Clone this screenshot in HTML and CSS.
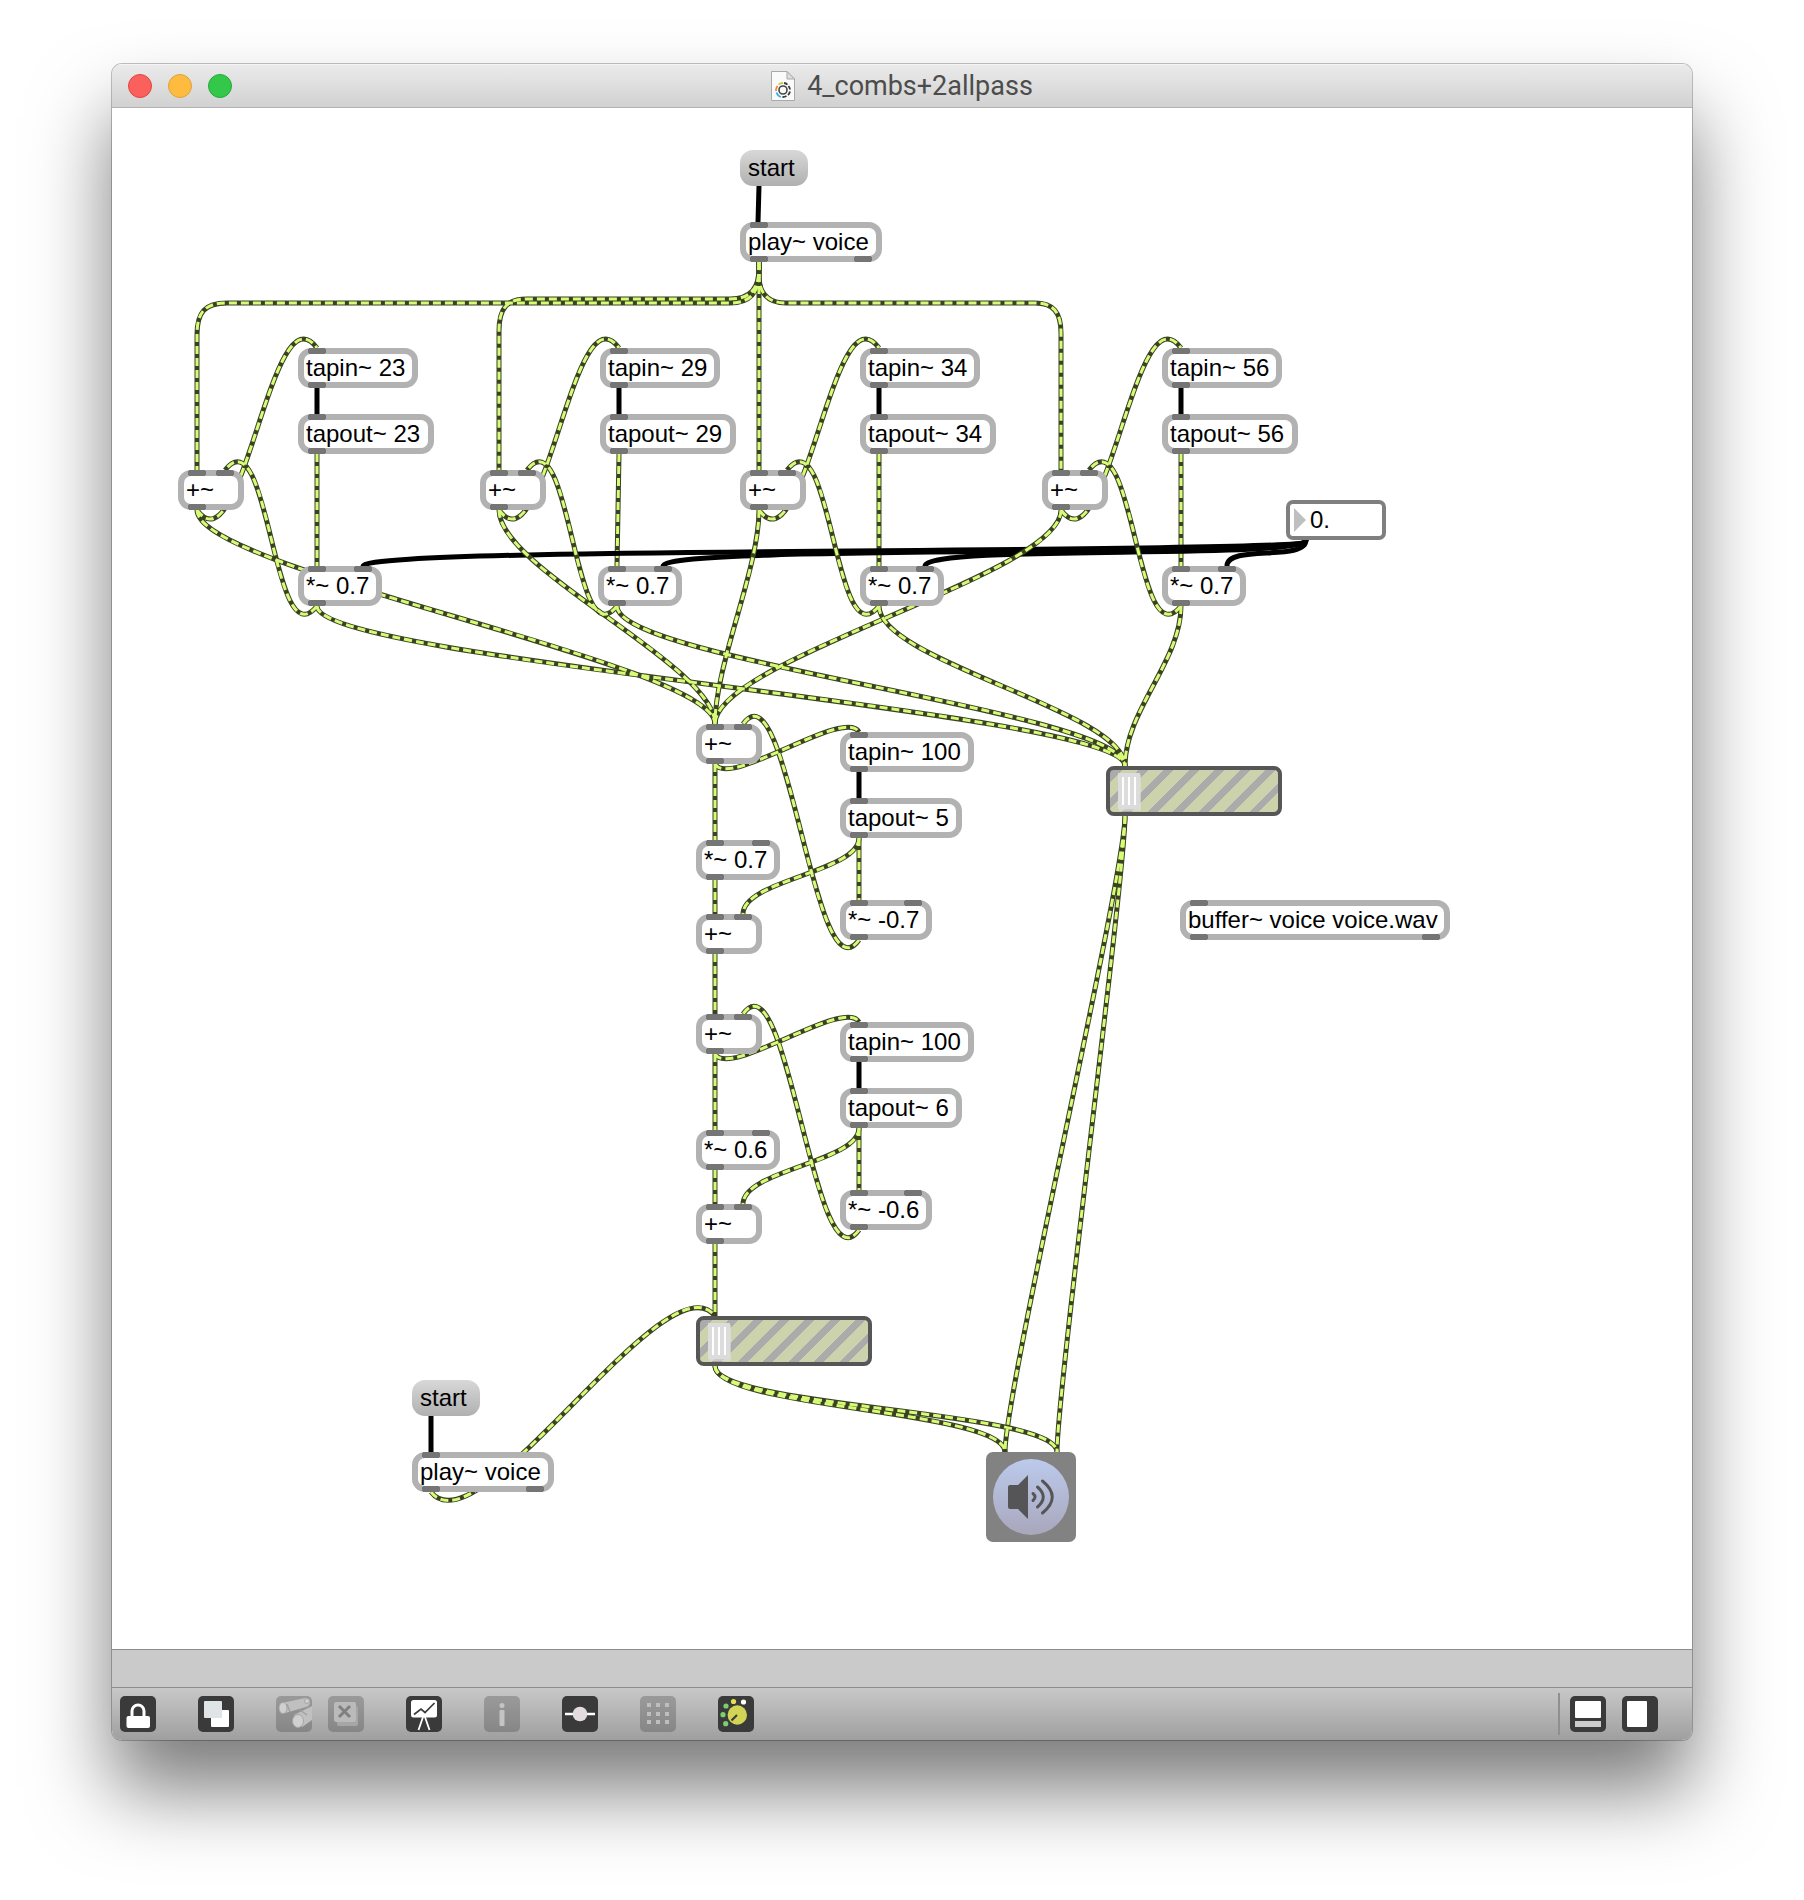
FILE: index.html
```html
<!DOCTYPE html>
<html lang="en">
<head>
<meta charset="utf-8">
<title>4_combs+2allpass</title>
<link rel="stylesheet" href="styles.css">
</head>
<body>
<main class="window">
  <header class="titlebar">
    <div class="lights">
      <button class="light light-close" aria-label="Close"></button>
      <button class="light light-minimize" aria-label="Minimize"></button>
      <button class="light light-zoom" aria-label="Zoom"></button>
    </div>
    <h1 class="title">
      <svg class="doc-icon" viewBox="0 0 24 30" aria-hidden="true">
        <path d="M.5.5H16L23.500 8V29.500H.5Z" fill="#fafafa" stroke="#a9a9a9"/>
        <path d="M16 .5V8h7.500Z" fill="#dedede" stroke="#a9a9a9"/>
        <circle cx="12" cy="19" r="4" fill="none" stroke="#444" stroke-width="1.600"/>
        <g fill="none" stroke-width="1.800">
          <path d="M13 12a7 7 0 0 1 3.500 1.600M17.500 15a7 7 0 0 1 1.500 3.500M19 20.500a7 7 0 0 1-2 3.500M15.500 25a7 7 0 0 1-4 1" stroke="#3c3c3c"/>
          <path d="M10 26a7 7 0 0 1-4.500-4.500" stroke="#35b4e8"/>
          <path d="M5 20a7 7 0 0 1 1.500-5" stroke="#f0803c"/>
          <path d="M7.500 13.600A7 7 0 0 1 12 12" stroke="#c9cf3c"/>
        </g>
      </svg>
      <span>4_combs+2allpass</span>
    </h1>
  </header>

  <section class="patcher" aria-label="Patch">
    <svg class="cords" viewBox="112 108 1580 1500" aria-hidden="true">
      <defs>
        <g id="cords-back">
          <path d="M317 454V566"/>
          <path d="M619 454L617 566"/>
          <path d="M879 454V566"/>
          <path d="M1181 454V566"/>
        </g>
        <g id="cords-front">
          <path d="M759 262V272C759 292 751 303 730 303H227C205 303 197 312 197 335V470"/>
          <path d="M759 262V268C759 288 751 299 730 299H527C507 299 499 308 499 331V470"/>
          <path d="M759 262V276C759 292 767 303 786 303H1035C1053 303 1061 312 1061 333V470"/>
          <path d="M759 262V470"/>

          <path d="M197 510C243 573 271 285 317 348"/>
          <path d="M499 510C545 573 573 285 619 348"/>
          <path d="M759 510C805 573 833 285 879 348"/>
          <path d="M1061 510C1107 573 1135 285 1181 348"/>

          <path d="M317 606C272 662 270 414 225 470"/>
          <path d="M617 606C573 662 571 414 527 470"/>
          <path d="M879 606C834 662 832 414 787 470"/>
          <path d="M1181 606C1136 662 1134 414 1089 470"/>

          <path d="M197 510C197 571 715 663 715 724"/>
          <path d="M499 510C499 569 715 665 715 724"/>
          <path d="M759 510C759 570 715 664 715 724"/>
          <path d="M1061 510C1061 575 715 659 715 724"/>

          <path d="M317 606C317 661 1125 711 1125 766"/>
          <path d="M617 606C617 661 1125 711 1125 766"/>
          <path d="M879 606C879 661 1125 711 1125 766"/>
          <path d="M1181 606C1181 661 1125 711 1125 766"/>

          <path d="M715 764V840M715 880V914M715 954V1014"/>
          <path d="M859 838V900"/>
          <path d="M715 764C729 789 845 707 859 732"/>
          <path d="M859 838C859 872 743 880 743 914"/>
          <path d="M859 940C814 1003 788 661 743 724"/>

          <path d="M715 1054V1130M715 1170V1204M715 1244V1316"/>
          <path d="M859 1128V1190"/>
          <path d="M715 1054C729 1079 845 997 859 1022"/>
          <path d="M859 1128C859 1162 743 1170 743 1204"/>
          <path d="M859 1230C814 1293 788 951 743 1014"/>

          <path d="M431 1492C479 1554 667 1254 715 1316"/>
          <path d="M715 1366C715 1408 1005 1410 1005 1452"/>
          <path d="M715 1366C715 1408 1057 1410 1057 1452"/>
          <path d="M1125 816C1125 876 1005 1392 1005 1452"/>
          <path d="M1125 816C1125 876 1057 1392 1057 1452"/>
        </g>
      </defs>
      <use href="#cords-back" class="cord-edge"/>
      <use href="#cords-back" class="cord-core"/>
      <g class="cord-control">
        <path d="M759 186L758 222"/>
        <path d="M317 388V414M619 388V414M879 388V414M1181 388V414"/>
        <path d="M859 772V798M859 1062V1088"/>
        <path d="M431 1416V1452"/>
        <path d="M1306 540C1306 556 363 545 363 566"/>
        <path d="M1306 540C1306 558 663 544 663 566"/>
        <path d="M1306 540C1306 560 925 544 925 566"/>
        <path d="M1306 540C1306 562 1227 544 1227 566"/>
      </g>
      <use href="#cords-front" class="cord-edge"/>
      <use href="#cords-front" class="cord-core"/>
    </svg>

    <button class="message at-start-a">start</button>
    <div class="object two-out at-play-a">play~ voice</div>

    <div class="object at-tapin-1">tapin~ 23</div>
    <div class="object at-tapout-1">tapout~ 23</div>
    <div class="object two-in at-sum-1">+~</div>
    <div class="object two-in at-mul-1">*~ 0.7</div>

    <div class="object at-tapin-2">tapin~ 29</div>
    <div class="object at-tapout-2">tapout~ 29</div>
    <div class="object two-in at-sum-2">+~</div>
    <div class="object two-in at-mul-2">*~ 0.7</div>

    <div class="object at-tapin-3">tapin~ 34</div>
    <div class="object at-tapout-3">tapout~ 34</div>
    <div class="object two-in at-sum-3">+~</div>
    <div class="object two-in at-mul-3">*~ 0.7</div>

    <div class="object at-tapin-4">tapin~ 56</div>
    <div class="object at-tapout-4">tapout~ 56</div>
    <div class="object two-in at-sum-4">+~</div>
    <div class="object two-in at-mul-4">*~ 0.7</div>

    <div class="number at-feedback"><input type="text" value="0." aria-label="Comb feedback"></div>

    <div class="object two-in at-sum-5">+~</div>
    <div class="object at-tapin-5">tapin~ 100</div>
    <div class="object at-tapout-5">tapout~ 5</div>
    <div class="object two-in at-mul-5">*~ 0.7</div>
    <div class="object two-in at-sum-6">+~</div>
    <div class="object two-in at-neg-5">*~ -0.7</div>

    <div class="object two-in at-sum-7">+~</div>
    <div class="object at-tapin-6">tapin~ 100</div>
    <div class="object at-tapout-6">tapout~ 6</div>
    <div class="object two-in at-mul-6">*~ 0.6</div>
    <div class="object two-in at-sum-8">+~</div>
    <div class="object two-in at-neg-6">*~ -0.6</div>

    <input class="gain at-gain-a" type="range" min="0" max="157" value="0" aria-label="Comb gain">
    <input class="gain at-gain-b" type="range" min="0" max="157" value="0" aria-label="Allpass gain">
    <div class="object two-out at-buffer">buffer~ voice voice.wav</div>

    <button class="message at-start-b">start</button>
    <div class="object two-out at-play-b">play~ voice</div>

    <button class="dac at-dac" aria-label="Audio output">
      <svg viewBox="0 0 90 90" aria-hidden="true">
        <defs>
          <linearGradient id="dac-face" x1="0" y1="0" x2="0" y2="1">
            <stop offset="0" stop-color="#bccaec"/>
            <stop offset="1" stop-color="#a8a7bb"/>
          </linearGradient>
        </defs>
        <circle cx="45" cy="45" r="38" fill="url(#dac-face)"/>
        <path d="M24 33H32L42 23V67L32 57H24Q22 57 22 55V35Q22 33 24 33Z" fill="#555557"/>
        <g fill="none" stroke="#555557" stroke-width="3" stroke-linecap="round">
          <path d="M47 41.500Q51 45 47 48.500"/>
          <path d="M51.500 35Q63 45 51.500 55"/>
          <path d="M56.500 29Q76 45 56.500 61"/>
        </g>
      </svg>
    </button>
  </section>

  <div class="status"></div>

  <footer class="toolbar">
    <button class="tool" aria-label="Lock">
      <svg viewBox="0 0 36 36"><path d="M12 22V15a6 6 0 0 1 12 0V22" fill="none" stroke="#fff" stroke-width="3"/><rect x="6.500" y="20" width="23.500" height="12" rx="2" fill="#fff"/></svg>
    </button>
    <button class="tool" aria-label="New view">
      <svg viewBox="0 0 36 36"><rect x="13" y="14" width="18" height="17" rx="1" fill="#fff"/><rect x="6" y="5" width="18" height="17" rx="1" fill="#dfe5e6"/></svg>
    </button>
    <button class="tool tool-off" disabled aria-label="Find">
      <svg viewBox="0 0 36 36"><g fill="#c0c0c0"><path d="M6 7L29 2Q34 2 34 6T30 11L9 17Z"/><path d="M18 19L36 10V24L26 31Z"/></g><g fill="#d0d0d0" stroke="#a6a6a6"><ellipse cx="7" cy="12" rx="4" ry="5.500"/><ellipse cx="22" cy="25" rx="5.500" ry="6.500"/><circle cx="31" cy="5" r="2.500"/></g><path d="M11 8l3 8M24 14l7 5" stroke="#a0a0a0" stroke-width="1.500"/></svg>
    </button>
    <button class="tool tool-off tool-paired" disabled aria-label="Delete view">
      <svg viewBox="0 0 36 36"><rect x="9" y="10" width="21" height="20" rx="2" fill="#a6a6a6"/><rect x="6" y="6" width="22" height="20" rx="2" fill="#bababa"/><path d="M11 10l11 11M22 10L11 21" stroke="#808080" stroke-width="3"/></svg>
    </button>
    <button class="tool" aria-label="Presentation">
      <svg viewBox="0 0 36 36"><path d="M17 21L12.500 34M19 21L23.500 34" stroke="#fff" stroke-width="1.800"/><rect x="5" y="4" width="26" height="17.500" rx="2.500" fill="#fff"/><path d="M8 18.500L15 13L19 16.500L28.500 7" fill="none" stroke="#3a3a3a" stroke-width="1.700"/></svg>
    </button>
    <button class="tool tool-off" disabled aria-label="Inspector">
      <svg viewBox="0 0 36 36" fill="#c4c4c4"><circle cx="18" cy="9.500" r="2.500"/><rect x="15.500" y="14" width="5" height="16" rx="1"/></svg>
    </button>
    <button class="tool" aria-label="Patch cords">
      <svg viewBox="0 0 36 36"><path d="M3 18H33" stroke="#fff" stroke-width="2.500"/><circle cx="18" cy="18" r="7.300" fill="#e2dcde"/></svg>
    </button>
    <button class="tool tool-off" disabled aria-label="Grid">
      <svg viewBox="0 0 36 36" fill="#bebebe"><path d="M7 7h4v4H7ZM16 7h4v4h-4ZM25 7h4v4h-4ZM7 16h4v4H7ZM16 16h4v4h-4ZM25 16h4v4h-4ZM7 24h4v4H7ZM16 24h4v4h-4ZM25 24h4v4h-4Z"/></svg>
    </button>
    <button class="tool" aria-label="Audio status">
      <svg viewBox="0 0 36 36"><circle cx="19.300" cy="19" r="9.700" fill="#d2d455"/><path d="M13.500 24.500L19 19" stroke="#3a3a3a" stroke-width="2.200"/><g fill="#78d070"><circle cx="7.700" cy="27.700" r="2.600"/><circle cx="5" cy="18.700" r="2.600"/><circle cx="8" cy="10" r="2.600"/></g><circle cx="15.500" cy="5.500" r="2.600" fill="#e8df4c"/><circle cx="25.500" cy="6" r="2.600" fill="#fff"/></svg>
    </button>
    <div class="toolbar-end">
      <button class="tool" aria-label="Bottom panel">
        <svg viewBox="0 0 36 36"><rect x="5" y="5" width="26" height="17" rx="1" fill="#fff"/><rect x="5" y="25" width="26" height="6" fill="#cbcbcb"/></svg>
      </button>
      <button class="tool tool-paired" aria-label="Side panel">
        <svg viewBox="0 0 36 36"><rect x="5" y="5" width="20" height="26" rx="1" fill="#fff"/></svg>
      </button>
    </div>
  </footer>
</main>
</body>
</html>
```
FILE: styles.css
```css
* { box-sizing: border-box; }

body {
  margin: 0;
  min-height: 100vh;
  padding: 64px 112px 160px;
  display: flex;
  background: #fff;
  font-family: "Liberation Sans", Arial, sans-serif;
  font-size: 24px;
  color: #000;
}

button {
  border: 0;
  padding: 0;
  font: inherit;
  color: inherit;
}

.window {
  flex: 1;
  min-width: 0;
  display: flex;
  flex-direction: column;
  border-radius: 10px;
  background: #fff;
  overflow: hidden;
  box-shadow: 0 0 0 1px rgba(0, 0, 0, .24), 0 50px 80px rgba(0, 0, 0, .52);
}

/* Title bar */
.titlebar {
  display: grid;
  grid-template-columns: 1fr auto 1fr;
  align-items: center;
  height: 44px;
  padding: 0 16px;
  border-bottom: 1px solid #b1b1b1;
  background: linear-gradient(#ebebeb, #d1d1d1);
  box-shadow: inset 0 1px #f4f4f4;
}

.lights { display: flex; gap: 16px; }

.light {
  width: 24px;
  height: 24px;
  border: 1px solid #e0443f;
  border-radius: 50%;
  background: #fc605c;
}
.light-minimize { border-color: #dfa13a; background: #fdbc40; }
.light-zoom { border-color: #25a93b; background: #34c84a; }

.title {
  display: flex;
  align-items: center;
  gap: 12px;
  margin: 0;
  font: 400 27px/30px Roboto, sans-serif;
  color: #4c4c4c;
}
.doc-icon { width: 24px; height: 30px; }

/* Patcher canvas */
.patcher {
  position: relative;
  flex: 1;
  min-height: 1500px;
  overflow: hidden;
}

.cords {
  position: absolute;
  left: 0;
  top: 0;
  width: 1580px;
  height: 1500px;
}
.cord-edge { fill: none; stroke: #3b4223; stroke-width: 5; }
.cord-core { fill: none; stroke: #d6fb76; stroke-width: 3; stroke-dasharray: 8 4; }
.cord-control { fill: none; stroke: #000; stroke-width: 5; }

.object,
.message,
.number,
.gain,
.dac { position: absolute; }

.object {
  height: 40px;
  padding-left: 2px;
  border: 6px solid #b2b2b2;
  border-radius: 13px;
  background: #fff;
  line-height: 28px;
  white-space: nowrap;
}

/* Inlets sit on the top edge of a box, outlets on the bottom edge */
.object::before,
.object::after {
  content: "";
  position: absolute;
  left: 4px;
  right: 4px;
  height: 6px;
  background: radial-gradient(circle at 3px 3px, #757575 3px, transparent 3px) left / 6px 6px no-repeat,
    radial-gradient(circle at 3px 3px, #757575 3px, transparent 3px) 12px 0 / 6px 6px no-repeat,
    linear-gradient(#757575, #757575) 3px 0 / 12px 6px no-repeat;
}
.object::before { top: -6px; }
.object::after { bottom: -6px; }

.two-in::before,
.two-out::after {
  background: radial-gradient(circle at 3px 3px, #757575 3px, transparent 3px) left / 6px 6px no-repeat,
    radial-gradient(circle at 3px 3px, #757575 3px, transparent 3px) 12px 0 / 6px 6px no-repeat,
    linear-gradient(#757575, #757575) 3px 0 / 12px 6px no-repeat,
    radial-gradient(circle at 3px 3px, #757575 3px, transparent 3px) right / 6px 6px no-repeat,
    radial-gradient(circle at 3px 3px, #757575 3px, transparent 3px) right 12px top 0 / 6px 6px no-repeat,
    linear-gradient(#757575, #757575) right 3px top 0 / 12px 6px no-repeat;
}

.message {
  width: 68px;
  height: 36px;
  padding-left: 8px;
  border-radius: 13px;
  background: linear-gradient(#d8d8d8, #b0b0b0);
  line-height: 36px;
  text-align: left;
}

.number {
  display: flex;
  align-items: center;
  gap: 4px;
  width: 100px;
  height: 40px;
  padding: 0 4px;
  border: 4px solid #7f7f7f;
  border-radius: 7px;
  background: #fff;
}
.number::before {
  content: "";
  flex: none;
  border: 12px solid transparent;
  border-left-color: #bfbfbf;
  border-right: 0;
}
.number input {
  min-width: 0;
  width: 100%;
  padding: 0;
  border: 0;
  background: none;
  font: inherit;
  color: inherit;
  outline: 0;
}

.gain {
  appearance: none;
  width: 176px;
  height: 50px;
  margin: 0;
  padding: 0 8px;
  border: 4px solid #565656;
  border-radius: 8px;
  background: repeating-linear-gradient(135deg, #ccd2ac 0 2px, #ababab 2px 9px, #ccd2ac 9px 18px);
}
.gain::-webkit-slider-thumb {
  appearance: none;
  width: 22px;
  height: 36px;
  border: solid #dcdcdc;
  border-width: 4px 3px;
  background: repeating-linear-gradient(90deg, #dcdcdc 0 1px, #fff 1px 3px, #dcdcdc 3px 6px);
  box-shadow: 1px 2px rgba(225, 225, 225, .6);
}

.dac {
  width: 90px;
  height: 90px;
  border-radius: 7px;
  background: #828282;
}
.dac svg { display: block; }

/* Box places on the canvas */
.at-start-a { left: 628px; top: 42px; }
.at-play-a { left: 628px; top: 114px; width: 142px; }

.at-tapin-1 { left: 186px; top: 240px; width: 120px; }
.at-tapout-1 { left: 186px; top: 306px; width: 136px; }
.at-sum-1 { left: 66px; top: 362px; width: 66px; }
.at-mul-1 { left: 186px; top: 458px; width: 84px; }

.at-tapin-2 { left: 488px; top: 240px; width: 120px; }
.at-tapout-2 { left: 488px; top: 306px; width: 136px; }
.at-sum-2 { left: 368px; top: 362px; width: 66px; }
.at-mul-2 { left: 486px; top: 458px; width: 84px; }

.at-tapin-3 { left: 748px; top: 240px; width: 120px; }
.at-tapout-3 { left: 748px; top: 306px; width: 136px; }
.at-sum-3 { left: 628px; top: 362px; width: 66px; }
.at-mul-3 { left: 748px; top: 458px; width: 84px; }

.at-tapin-4 { left: 1050px; top: 240px; width: 120px; }
.at-tapout-4 { left: 1050px; top: 306px; width: 136px; }
.at-sum-4 { left: 930px; top: 362px; width: 66px; }
.at-mul-4 { left: 1050px; top: 458px; width: 84px; }

.at-feedback { left: 1174px; top: 392px; }

.at-sum-5 { left: 584px; top: 616px; width: 66px; }
.at-tapin-5 { left: 728px; top: 624px; width: 134px; }
.at-tapout-5 { left: 728px; top: 690px; width: 122px; }
.at-mul-5 { left: 584px; top: 732px; width: 84px; }
.at-sum-6 { left: 584px; top: 806px; width: 66px; }
.at-neg-5 { left: 728px; top: 792px; width: 92px; }

.at-sum-7 { left: 584px; top: 906px; width: 66px; }
.at-tapin-6 { left: 728px; top: 914px; width: 134px; }
.at-tapout-6 { left: 728px; top: 980px; width: 122px; }
.at-mul-6 { left: 584px; top: 1022px; width: 84px; }
.at-sum-8 { left: 584px; top: 1096px; width: 66px; }
.at-neg-6 { left: 728px; top: 1082px; width: 92px; }

.at-gain-a { left: 994px; top: 658px; }
.at-gain-b { left: 584px; top: 1208px; }
.at-buffer { left: 1068px; top: 792px; width: 270px; }

.at-start-b { left: 300px; top: 1272px; }
.at-play-b { left: 300px; top: 1344px; width: 142px; }
.at-dac { left: 874px; top: 1344px; }

/* Status strip and toolbar */
.status {
  height: 38px;
  border-top: 1px solid #8d8d8d;
  background: #cacaca;
}

.toolbar {
  display: flex;
  align-items: center;
  gap: 42px;
  height: 53px;
  padding: 0 34px 0 8px;
  border-top: 1px solid #8d8d8d;
  background: linear-gradient(#c8c8c8, #9f9f9f);
}

.tool {
  width: 36px;
  height: 36px;
  border-radius: 5px;
  background: #3a3a3a;
}
.tool svg { display: block; }
.tool-off { background: linear-gradient(#9a9a9a, #868686); }
.tool-paired { margin-left: -26px; }

.toolbar-end {
  display: flex;
  align-items: center;
  gap: 42px;
  height: 42px;
  margin-left: auto;
  padding-left: 10px;
  border-left: 2px solid #8f8f8f;
}
```
